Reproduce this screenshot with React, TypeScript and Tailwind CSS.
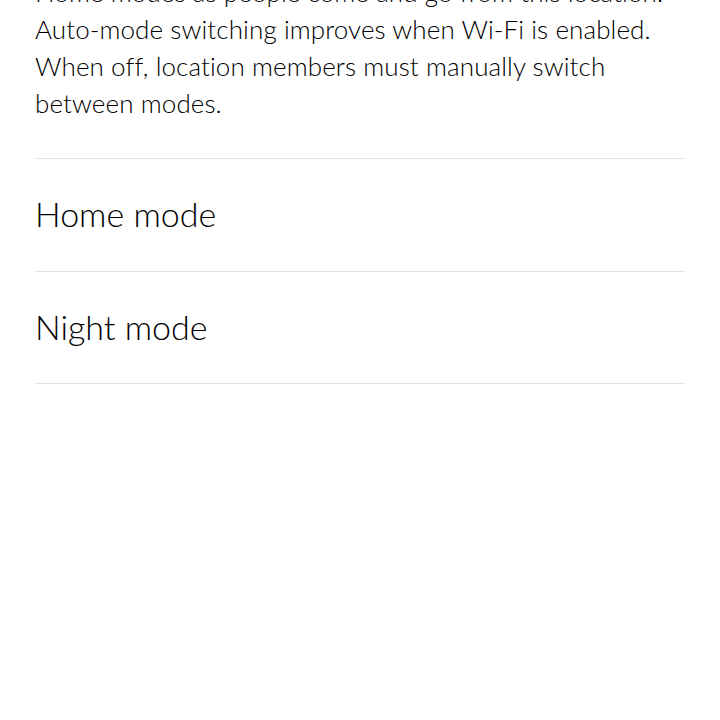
export default function App() {
  const modes = ['Home mode', 'Night mode']

  return (
    <div className="h-[720px] w-[720px] overflow-hidden bg-white font-['Lato',sans-serif] font-light text-black">
      <div className="px-[35px]">
        {/* description, scrolled so first line is clipped */}
        <p className="mt-[-26px] text-[26px] leading-[37px] tracking-[0.1px]">
          Home modes as people come and go from this location. Auto-mode switching improves when Wi-Fi is enabled.
          When off, location members must manually switch between modes.
        </p>

        <div className="mt-[36px] border-t border-[#e2e2e2]">
          <div className="flex h-[113px] items-center border-b border-[#e2e2e2] pb-[3px]">
            <span className="text-[34px] tracking-[0px]">{modes[0]}</span>
          </div>
          <div className="flex h-[112px] items-center border-b border-[#e2e2e2] pb-[3px]">
            <span className="text-[34px] tracking-[0px]">{modes[1]}</span>
          </div>
        </div>
      </div>
    </div>
  )
}
